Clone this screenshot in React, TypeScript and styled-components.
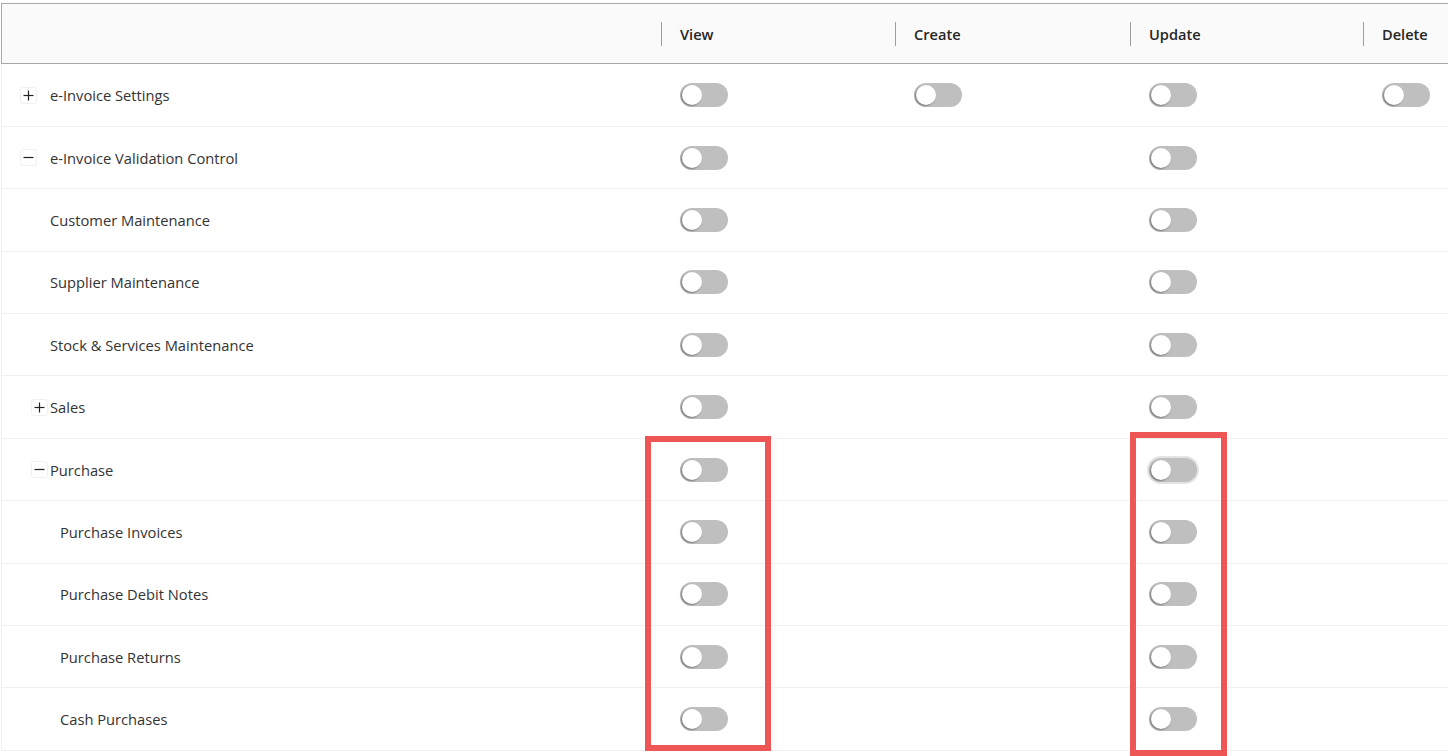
import styled, { createGlobalStyle } from "styled-components";

const GlobalStyle = createGlobalStyle`
  html, body {
    margin: 0;
    padding: 0;
    background: #ffffff;
    overflow: hidden;
  }
  body {
    font-family: "Open Sans", "Noto Sans", sans-serif;
    color: rgba(0, 0, 0, 0.85);
  }
`;

type Row = {
  label: string;
  pad: number;
  gap?: number;
  expand?: "plus" | "minus";
  perms: boolean[];
};

const rows: Row[] = [
  { label: "e-Invoice Settings", pad: 18, gap: 13, expand: "plus", perms: [true, true, true, true] },
  { label: "e-Invoice Validation Control", pad: 18, gap: 13, expand: "minus", perms: [true, false, true, false] },
  { label: "Customer Maintenance", pad: 48, perms: [true, false, true, false] },
  { label: "Supplier Maintenance", pad: 48, perms: [true, false, true, false] },
  { label: "Stock & Services Maintenance", pad: 48, perms: [true, false, true, false] },
  { label: "Sales", pad: 29, gap: 2, expand: "plus", perms: [true, false, true, false] },
  { label: "Purchase", pad: 29, gap: 2, expand: "minus", perms: [true, false, true, false] },
  { label: "Purchase Invoices", pad: 58, perms: [true, false, true, false] },
  { label: "Purchase Debit Notes", pad: 58, perms: [true, false, true, false] },
  { label: "Purchase Returns", pad: 58, perms: [true, false, true, false] },
  { label: "Cash Purchases", pad: 58, perms: [true, false, true, false] },
];

const columns = ["View", "Create", "Update", "Delete"];

const Page = styled.div`
  position: relative;
  width: 1448px;
  height: 756px;
  padding: 3px 0 0 1px;
  box-sizing: border-box;
  overflow: hidden;
`;

const Table = styled.div`
  width: 1597px;
  border-left: 1px solid #f0f0f0;
`;

const Grid = styled.div`
  display: grid;
  grid-template-columns: 659px 234px 235px 233px 234px;
`;

const HeaderRow = styled(Grid)`
  height: 61px;
  margin-bottom: 0.5px;
  box-sizing: border-box;
  background: #fafafa;
  border-top: 1px solid #a8a8a8;
  border-bottom: 1px solid #a8a8a8;
  margin-left: -1px;
  border-left: 1px solid #a8a8a8;
`;

const HeaderCell = styled.div`
  display: flex;
  align-items: center;
  font-size: 14.6px;
  font-weight: 600;
  color: #262626;
`;

const Divider = styled.span`
  width: 1px;
  height: 24px;
  background: #9e9e9e;
  margin-right: 18px;
`;

const BodyRow = styled(Grid)`
  height: 62.4px;
  box-sizing: border-box;
  border-bottom: 1px solid #f0f0f0;
`;

const LabelCell = styled.div<{ $pad: number }>`
  display: flex;
  align-items: center;
  padding-left: ${(p) => p.$pad}px;
  font-size: 14.7px;
  color: #333333;
`;

const ExpandBox = styled.span<{ $gap: number }>`
  display: inline-flex;
  align-items: center;
  justify-content: center;
  width: 17px;
  height: 17px;
  box-sizing: border-box;
  border: 1px solid #f0f0f0;
  border-radius: 3px;
  margin-right: ${(p) => p.$gap}px;
  color: #222;
`;

const ToggleCell = styled.div`
  display: flex;
  align-items: center;
  padding-left: 18.5px;
`;

const Track = styled.span<{ $ring?: boolean }>`
  position: relative;
  display: inline-block;
  width: 48px;
  height: 24px;
  border-radius: 12px;
  background: #bfbfbf;
  box-shadow: ${(p) => (p.$ring ? "0 0 0 2px #e4e4e4" : "none")};
`;

const Knob = styled.span`
  position: absolute;
  left: 2px;
  top: 2px;
  width: 20px;
  height: 20px;
  border-radius: 50%;
  background: #ffffff;
  box-shadow: -1px 1px 2px rgba(0, 0, 0, 0.4);
`;

const Highlight = styled.div<{ $x: number; $y: number; $w: number; $h: number }>`
  position: absolute;
  left: ${(p) => p.$x}px;
  top: ${(p) => p.$y}px;
  width: ${(p) => p.$w}px;
  height: ${(p) => p.$h}px;
  box-sizing: border-box;
  border: 6px solid #ee5555;
  pointer-events: none;
`;

function ExpandIcon({ kind }: { kind: "plus" | "minus" }) {
  return (
    <svg width="11" height="11" viewBox="0 0 11 11">
      <path d="M0.5 5.5h10" stroke="#222" strokeWidth="1.2" />
      {kind === "plus" && <path d="M5.5 0.5v10" stroke="#222" strokeWidth="1.2" />}
    </svg>
  );
}

function Toggle({ ring }: { ring?: boolean }) {
  return (
    <Track $ring={ring}>
      <Knob />
    </Track>
  );
}

export default function App() {
  return (
    <>
      <GlobalStyle />
      <Page>
        <Table>
          <HeaderRow>
            <HeaderCell />
            {columns.map((c) => (
              <HeaderCell key={c}>
                <Divider />
                {c}
              </HeaderCell>
            ))}
          </HeaderRow>
          {rows.map((r) => (
            <BodyRow key={r.label}>
              <LabelCell $pad={r.pad}>
                {r.expand && (
                  <ExpandBox $gap={r.gap ?? 0}>
                    <ExpandIcon kind={r.expand} />
                  </ExpandBox>
                )}
                {r.label}
              </LabelCell>
              {r.perms.map((on, i) => (
                <ToggleCell key={i}>
                  {on && <Toggle ring={r.label === "Purchase" && i === 2} />}
                </ToggleCell>
              ))}
            </BodyRow>
          ))}
        </Table>
        <Highlight $x={645} $y={436} $w={126} $h={315} />
        <Highlight $x={1130} $y={432} $w={97} $h={324} />
      </Page>
    </>
  );
}
